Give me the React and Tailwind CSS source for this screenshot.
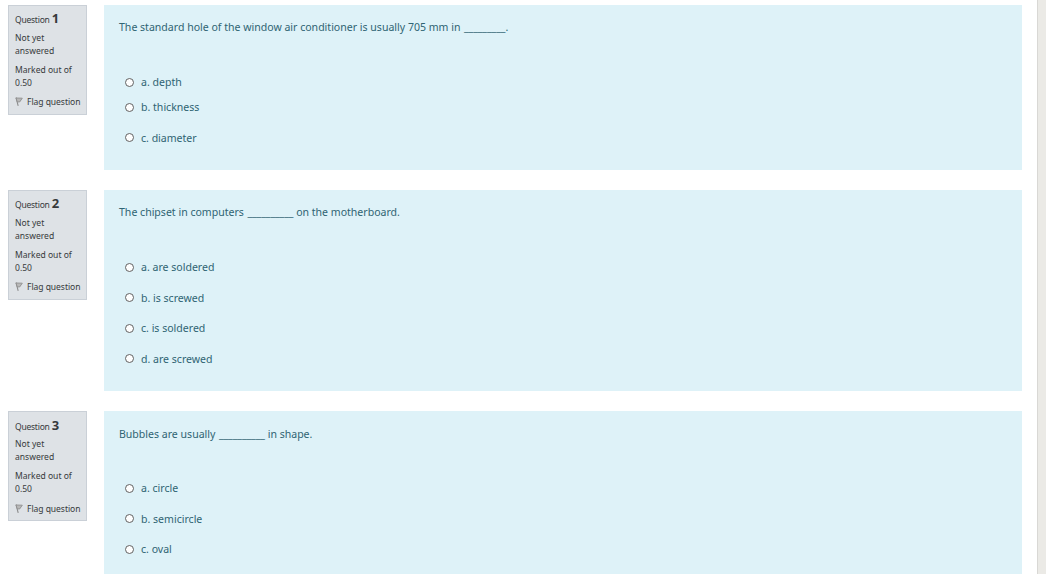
import React, { useState } from 'react';

const questions = [
  {
    id: 1,
    height: 'h-[165px]',
    before: 'The standard hole of the window air conditioner is usually 705 mm in',
    blank: '_________',
    after: '.',
    options: [
      { label: 'a. depth', row: 'h-[25px]' },
      { label: 'b. thickness' },
      { label: 'c. diameter' }
    ]
  },
  {
    id: 2,
    height: 'h-[201px]',
    before: 'The chipset in computers',
    blank: '__________',
    after: ' on the motherboard.',
    options: [
      { label: 'a. are soldered' },
      { label: 'b. is screwed' },
      { label: 'c. is soldered' },
      { label: 'd. are screwed' }
    ]
  },
  {
    id: 3,
    height: 'h-[201px]',
    titlePad: 'pt-px',
    flagPad: 'pt-px',
    before: 'Bubbles are usually',
    blank: '__________',
    after: ' in shape.',
    options: [{ label: 'a. circle' }, { label: 'b. semicircle' }, { label: 'c. oval' }]
  }
];

const FlagIcon = () => (
  <svg className="mb-0.5 mr-1 h-[11px] w-2 shrink-0" viewBox="0 0 8 11" fill="none">
    <path d="M1 1.5 L3.2 9.8" stroke="#8b8b8b" strokeWidth="1.1" />
    <path d="M1 2 L7.3 2.2 L4.6 6 L2.2 5.8 Z" fill="#b8b8b8" stroke="#8f8f8f" strokeWidth="0.9" />
  </svg>
);

const QuestionInfo = ({ question }) => (
  <div className="h-[110px] w-[79px] shrink-0 border border-[#cad0d7] bg-[#dee2e6] pl-1.5 pt-[3px] text-[8.55px] leading-[13px] text-[#373a3c]">
    <h3 className={`flex h-[18px] items-baseline whitespace-nowrap leading-[18px] tracking-[-0.25px] ${question.titlePad || ''}`}>
      Question<span className="ml-0.5 text-[13px] font-bold tracking-normal">{question.id}</span>
    </h3>
    <div className="mt-[5px]">Not yet<br />answered</div>
    <div className="mt-1.5 whitespace-nowrap">Marked out of<br />0.50</div>
    <div className={`mt-1.5 flex items-center whitespace-nowrap tracking-[-0.05px] ${question.flagPad || ''}`}>
      <FlagIcon />
      Flag question
    </div>
  </div>
);

const Question = ({ question }) => {
  const [selected, setSelected] = useState(null);

  return (
    <div className="flex gap-[17px]">
      <QuestionInfo question={question} />
      <div className={`w-[918px] bg-[#def2f8] pl-[15px] pt-[14px] text-[10.55px] text-[#2f6473] ${question.height}`}>
        <p className={`flex h-4 items-center whitespace-pre leading-4 ${question.titlePad || ''}`}>
          {question.before}
          <span className="ml-[3.5px] tracking-[-0.08px]">{question.blank}</span>
          {question.after}
        </p>
        <div className="mt-[32.8px] pl-1.5">
          {question.options.map((option) => (
            <label key={option.label} className={`flex items-start ${option.row || 'h-[30.6px]'}`}>
              <span className="flex h-[30.6px] items-center">
                <input
                  type="radio"
                  name={`question-${question.id}`}
                  checked={selected === option.label}
                  onChange={() => setSelected(option.label)}
                  className="mb-0.5 mr-[7px] h-[9px] w-[9px] appearance-none rounded-full border border-[#626262] bg-white checked:border-[3px]"
                />
                {option.label}
              </span>
            </label>
          ))}
        </div>
      </div>
    </div>
  );
};

const App = () => (
  <div className="flex h-[574px] w-[1046px] overflow-hidden bg-[#ebeae6] font-['Noto_Sans','Open_Sans',sans-serif]">
    <main className="flex w-[1038px] flex-col gap-5 border-r border-[#d9d8d5] bg-white pl-2 pt-[5px]">
      {questions.map((question) => (
        <Question key={question.id} question={question} />
      ))}
    </main>
  </div>
);

export default App;
